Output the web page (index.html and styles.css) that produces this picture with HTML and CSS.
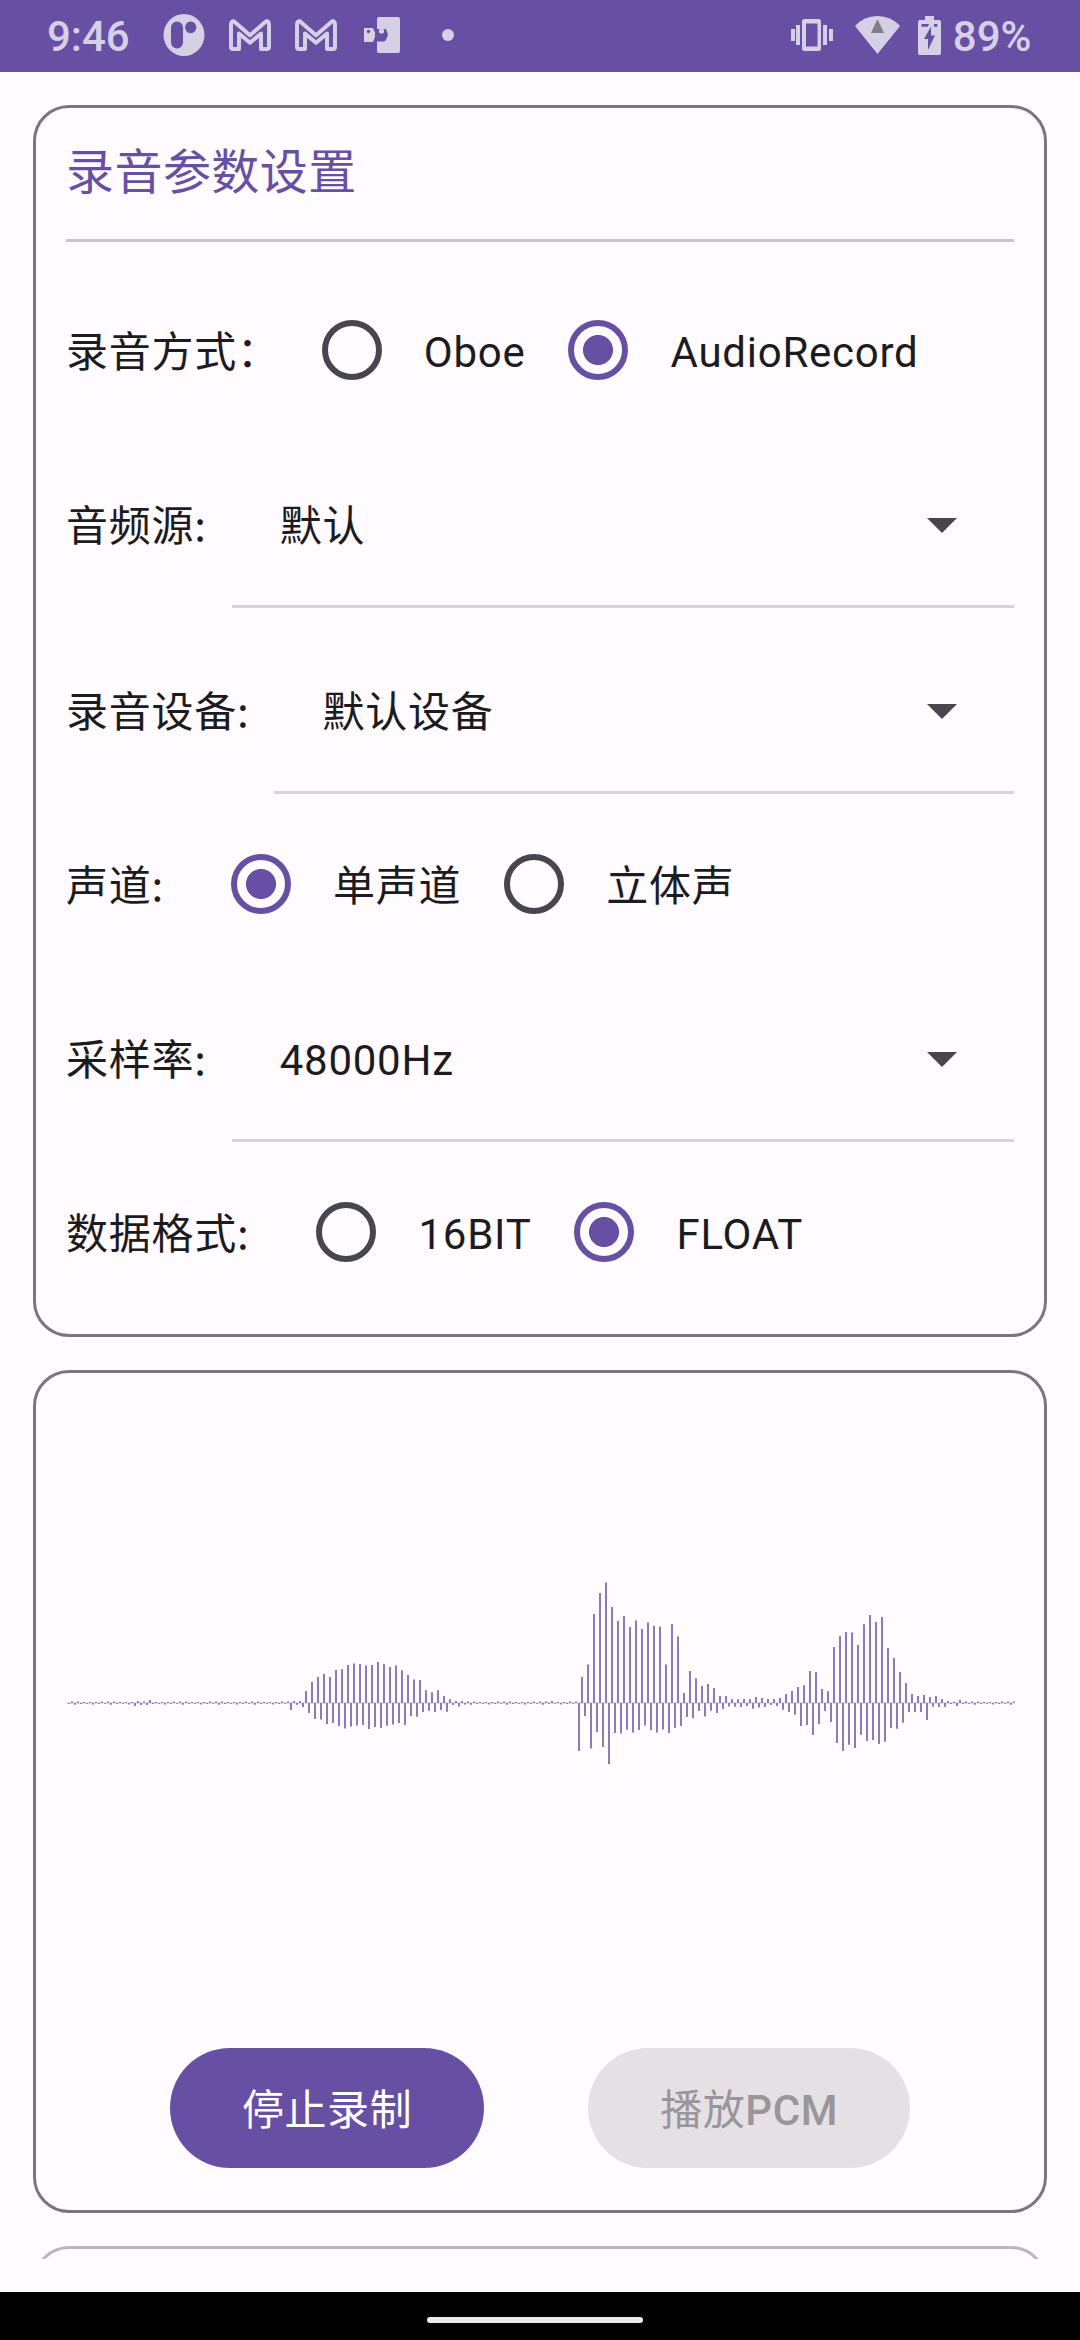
FILE: index.html
```html
<!DOCTYPE html>
<html lang="zh-CN">
<head>
<meta charset="utf-8">
<title>录音参数设置</title>
<link rel="stylesheet" href="styles.css">
</head>
<body>
<div class="screen">
  <header class="status-bar">
    <span class="clock">9:46</span>
    <div class="notifications">
      <svg class="icon" width="42" height="42" viewBox="0 0 42 42"><path fill-rule="evenodd" d="M21 0a20.500 21 0 1 1 0 42a20.500 21 0 1 1 0-42zM14 7.500a6 6 0 0 0-6 6v15a6 6 0 0 0 12 0v-15a6 6 0 0 0-6-6zM27.700 7.500a5.600 5.900 0 1 0 .01 0z"/></svg>
      <svg class="icon" width="42" height="32" viewBox="0 0 42 32"><path class="envelope" d="M2 28V5.500Q2 2 4.800 2.300L21 16.200L37.200 2.300Q40 2 40 5.500V28Q40 30 38 30H32V14.500L21 23.800L10 14.500V30H4Q2 30 2 28z"/></svg>
      <svg class="icon" width="42" height="32" viewBox="0 0 42 32"><path class="envelope" d="M2 28V5.500Q2 2 4.800 2.300L21 16.200L37.200 2.300Q40 2 40 5.500V28Q40 30 38 30H32V14.500L21 23.800L10 14.500V30H4Q2 30 2 28z"/></svg>
      <svg class="icon door" width="36" height="36" viewBox="0 0 36 36"><rect x="13" width="23" height="36" rx="2"/><path class="cut" d="M12 12h10l2 5.500-2 5.500-2 1.500h-8z"/><circle cx="17.500" cy="14" r="2.600"/><path d="M0 11h9l2 4.500V20l-2 5H0z"/><circle class="cut" cx="4.500" cy="14.500" r="1.700"/></svg>
      <svg class="icon more" width="12" height="12" viewBox="0 0 12 12"><circle cx="6" cy="6" r="6"/></svg>
    </div>
    <div class="system">
      <svg class="icon vibrate" width="42" height="32" viewBox="0 0 42 32"><path fill-rule="evenodd" d="M0 10h4v12H0zM5 6h4v20H5zM13.500 0h14q2.500 0 2.500 2.500v27q0 2.500-2.500 2.500h-14q-2.500 0-2.500-2.500v-27Q11 0 13.500 0zM15 4.500v23h11.500v-23zM32 6h4v20h-4zM38 10h4v12h-4z"/></svg>
      <svg class="icon wifi" width="45" height="38" viewBox="0 0 45 38"><path d="M0 10Q9 0 22.500 0T45 10L22.500 38z"/><path class="wifi-mark" d="M22.500 3l6.500 14H16z"/></svg>
      <svg class="icon battery" width="23" height="39" viewBox="0 0 23 39"><path fill-rule="evenodd" d="M7 0h9v4h5q2 0 2 2v31q0 2-2 2H2q-2 0-2-2V6q0-2 2-2h5zM3.500 8v2.700h6.300L11 8zM16 8v2.700h3.300V8zM13 10.500L6 23h4v11l7-14.500h-4z"/></svg>
      <span class="level">89%</span>
    </div>
  </header>

  <main class="content">
    <section class="card settings">
      <h1 class="title">录音参数设置</h1>
      <div class="rows">
        <div class="row">
          <span class="label wide">录音方式：</span>
          <div class="option"><i class="radio"></i><span class="text">Oboe</span></div>
          <div class="option"><i class="radio on"></i><span class="text">AudioRecord</span></div>
        </div>
        <div class="row select-row">
          <span class="label">音频源:</span>
          <div class="select"><span class="text">默认</span><svg class="arrow" width="30" height="15" viewBox="0 0 30 15"><path d="M0 0h30L15 15z"/></svg></div>
        </div>
        <div class="row select-row">
          <span class="label">录音设备:</span>
          <div class="select"><span class="text">默认设备</span><svg class="arrow" width="30" height="15" viewBox="0 0 30 15"><path d="M0 0h30L15 15z"/></svg></div>
        </div>
        <div class="row">
          <span class="label">声道:</span>
          <div class="option"><i class="radio on"></i><span class="text">单声道</span></div>
          <div class="option"><i class="radio"></i><span class="text">立体声</span></div>
        </div>
        <div class="row select-row">
          <span class="label">采样率:</span>
          <div class="select"><span class="text">48000Hz</span><svg class="arrow" width="30" height="15" viewBox="0 0 30 15"><path d="M0 0h30L15 15z"/></svg></div>
        </div>
        <div class="row">
          <span class="label">数据格式:</span>
          <div class="option"><i class="radio"></i><span class="text">16BIT</span></div>
          <div class="option"><i class="radio on"></i><span class="text">FLOAT</span></div>
        </div>
      </div>
    </section>

    <section class="card recorder">
      <svg class="wave" width="949" height="600" viewBox="0 0 949 600">
        <rect class="axis" x="0" y="299" width="948" height="2"/>
        <path class="bars" id="bars"/>
      </svg>
      <div class="buttons">
        <button class="button primary">停止录制</button>
        <button class="button" disabled>播放<b>PCM</b></button>
      </div>
    </section>

    <section class="card next"></section>
  </main>

  <footer class="nav-bar"><div class="handle"></div></footer>
</div>
<script src="wave.js"></script>
</body>
</html>
```

FILE: styles.css
```css
* { box-sizing: border-box; }

body {
  margin: 0;
  background: #fffbff;
  color: #1c1b1e;
  font: 400 42px/60px Roboto, "Noto Sans CJK SC", sans-serif;
  letter-spacing: .75px;
}

.screen {
  width: 1080px;
  height: 2340px;
  display: flex;
  flex-direction: column;
  overflow: hidden;
}

.status-bar {
  flex: none;
  height: 72px;
  padding: 0 48.500px 2px 47px;
  display: flex;
  align-items: center;
  background: #6750a4;
  color: #d6d0e6;
  font-weight: 500;
  letter-spacing: 0;
}
.icon { display: block; fill: #d6d0e6; }
.clock { width: 116px; padding-top: 3px; }
.notifications { display: flex; align-items: center; gap: 24px; }
.icon .envelope { fill: none; stroke: #d6d0e6; stroke-width: 4; stroke-linejoin: round; }
.icon .cut { fill: #6750a4; }
.door { margin-left: 3px; }
.more { margin-left: 18px; }
.system { margin-left: auto; display: flex; align-items: center; }
.wifi { margin-left: 22px; }
.icon .wifi-mark { fill: #808080; }
.battery { margin-left: 18px; }
.level { margin-left: 12px; padding-top: 3px; }

.content {
  flex: none;
  height: 2187px;
  padding: 33px 33px 0;
  display: flex;
  flex-direction: column;
  gap: 33px;
  overflow: hidden;
}

.card {
  flex: none;
  border: 3px solid #7b757f;
  border-radius: 36px;
  padding: 30px;
}

.settings { height: 1232px; }
.title {
  height: 104px;
  margin: 0;
  padding-top: 2px;
  border-bottom: 3px solid #c9c5d0;
  color: #6750a4;
  font-size: 48px;
  font-weight: 400;
  line-height: 66px;
  letter-spacing: .45px;
}
.rows { display: flex; flex-direction: column; gap: 18px; margin-top: 36px; }
.row { height: 144px; display: flex; align-items: center; }
.select-row { height: 168px; }
.label {
  margin-right: 67px;
  padding-bottom: 2px;
  font-family: "Noto Sans CJK SC", sans-serif;
  white-space: nowrap;
}
.label.wide { margin-right: 42px; }
.select-row .label { margin-right: 25px; }
.text { padding-top: 6px; }
.option { display: flex; align-items: center; gap: 42px; margin-right: 43px; }
.radio {
  flex: none;
  width: 60px;
  height: 60px;
  border: 6px solid #49454e;
  border-radius: 50%;
}
.radio.on {
  border-color: #6750a4;
  background: radial-gradient(circle, #6750a4 14.600px, transparent 15.400px);
}
.select {
  flex: 1;
  height: 168px;
  padding: 3px 57px 0 48px;
  display: flex;
  align-items: center;
  justify-content: space-between;
  border-bottom: 3px solid #d6d2d7;
}
.arrow { margin-top: 3px; fill: #49454e; }

.recorder { height: 843px; }
.wave { display: block; }
.axis { fill: #e1dbee; }
.bars { fill: #8b7bb9; }
.buttons { display: flex; justify-content: space-evenly; margin-top: 45px; }
.button {
  height: 120px;
  padding: 5px 72px 0;
  border: 0;
  border-radius: 60px;
  background: #e4e0e4;
  color: #99959a;
  font: inherit;
  letter-spacing: .6px;
  white-space: nowrap;
}
.button b { font-weight: 500; }
.button.primary { background: #6750a4; color: #fff; }

.next { height: 400px; border-color: #bbb5bf; }

.nav-bar {
  flex: none;
  height: 48px;
  margin-top: 33px;
  padding: 8px 10px 0 0;
  display: flex;
  justify-content: center;
  align-items: center;
  background: #000;
}
.handle { width: 216px; height: 6px; border-radius: 3px; background: #ebebeb; }
```

FILE: wave.js
```js
// Samples alternate between troughs (odd index) and peaks (even index).
const quiet = [0.7, 1.6, 1.7, 1.6, 1, 0.9, 0.8, 1, 1.6, 0.9, 1, 1.6];
const bumps = { 23: 3, 24: 2, 25: 2, 27: 2, 28: 3, 162: 2 };

// Loud passages, keyed by the index of their first sample.
const passages = {
  75: [7, 2, 1.7, 2, 4, 12, 10, 21, 16, 26, 16.5, 29, 21, 26, 20, 33, 23, 33.7,
    25.5, 38, 23.5, 39.5, 22.5, 39, 22, 37.5, 26, 38, 24, 41, 24.7, 39, 22.7,
    36, 21.5, 37.5, 20, 32.7, 22, 28, 13, 23.5, 13.7, 23, 9, 12.7, 7.7, 10.7,
    9, 12.7, 7, 7, 8.7, 3.7, 2, 2, 3.5, 2, 1.6],
  171: [48, 26, 13, 38.5, 45.5, 89, 29, 110, 44, 120.5, 61, 96, 30, 82, 30.5,
    87, 26.7, 76, 29.5, 82.5, 27, 74, 22.5, 80.5, 27.3, 77.3, 29.5, 76.5,
    26.5, 38.5, 30, 79, 24.7, 66.5, 23, 10, 14, 32, 15.3, 24.7, 8, 17, 13.5,
    19, 7.7, 15, 10, 7, 6, 7, 3.5, 3.7, 3.7, 3.7, 4, 4, 3, 4, 5.7, 6, 4.5, 5,
    4, 4, 2, 4, 3, 5, 6.7, 9, 9, 12, 11.5, 16, 23, 17.7, 22, 32, 32, 31, 21,
    14, 8, 11.7, 19, 56, 40, 67, 48, 71, 41.7, 70.5, 45, 58, 31.7, 78.7, 38,
    88, 37, 81, 41, 86, 38.7, 55, 25, 45, 25.7, 31, 19.7, 20, 9, 9, 9, 7, 9,
    8, 17, 6, 3.7, 7, 4, 4, 4, 2, 1, 1.3, 3, 3]
};

const samples = [];
for (let i = 1; i <= 316; i++) samples[i] = bumps[i] || quiet[(i - 1) % quiet.length];
for (const start in passages) {
  passages[start].forEach((value, k) => { samples[+start + k] = value; });
}

let d = "";
samples.forEach((value, i) => {
  const x = 3 * i - 1;
  const y = i % 2 ? 300 : 300 - value;
  d += `M${x} ${y}h2v${value}h-2z`;
});
document.getElementById("bars").setAttribute("d", d);
```
